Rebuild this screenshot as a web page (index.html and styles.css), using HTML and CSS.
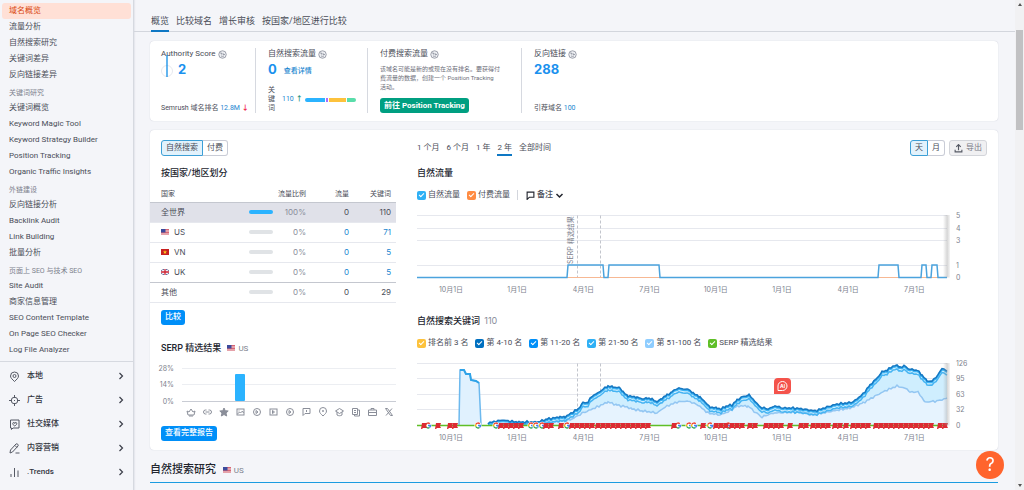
FILE: index.html
```html
<!DOCTYPE html>
<html lang="zh-CN">
<head>
    <meta charset="UTF-8">
    <meta name="viewport" content="width=device-width, initial-scale=1.0">
    <title>域名概览</title>
    <link rel="stylesheet" href="styles.css">
</head>
<body>
    <!-- shared icons -->
    <svg class="sprite" aria-hidden="true">
        <symbol id="flag-us" viewBox="0 0 16 12">
            <rect width="16" height="12" fill="#f3dfe2"/>
            <path d="M0 1h16M0 4h16M0 7h16M0 10h16" stroke="#cf4557" stroke-width="1.6"/>
            <rect width="9" height="7" fill="#3c4a9c"/>
        </symbol>
        <symbol id="flag-vn" viewBox="0 0 16 12">
            <rect width="16" height="12" fill="#c8201f"/>
            <path d="M8 2l1 3h3L9.600 7l1 3L8 8.200 5.400 10l1-3L4 5h3z" fill="#ffd21f"/>
        </symbol>
        <symbol id="flag-uk" viewBox="0 0 16 12">
            <rect width="16" height="12" fill="#2b3a7c"/>
            <path d="M0 0l16 12M16 0L0 12" stroke="#fff" stroke-width="2.400"/>
            <path d="M8 0v12M0 6h16" stroke="#fff" stroke-width="5"/>
            <path d="M8 0v12M0 6h16" stroke="#cc2233" stroke-width="2.600"/>
        </symbol>
        <symbol id="globe" viewBox="0 0 18 18">
            <circle cx="9" cy="9" r="7.500" fill="#eceef2" stroke="#8a8e9b" stroke-width="1.600"/>
            <path d="M4 6h3v3M10 6v3h4M6 12c2 1 4 1 6 0" fill="none" stroke="#8a8e9b" stroke-width="1.600"/>
        </symbol>
        <symbol id="chevron" viewBox="0 0 8 10">
            <path d="M2 1l4 4-4 4" fill="none" stroke="#3c3f4a" stroke-width="1.600"/>
        </symbol>
    </svg>

    <aside class="sidebar">
        <nav class="menu">
            <a href="#" class="active">域名概览</a>
            <a href="#">流量分析</a>
            <a href="#">自然搜索研究</a>
            <a href="#">关键词差异</a>
            <a href="#">反向链接差异</a>
            <h4>关键词研究</h4>
            <a href="#">关键词概览</a>
            <a href="#">Keyword Magic Tool</a>
            <a href="#">Keyword Strategy Builder</a>
            <a href="#">Position Tracking</a>
            <a href="#">Organic Traffic Insights</a>
            <h4>外链建设</h4>
            <a href="#">反向链接分析</a>
            <a href="#">Backlink Audit</a>
            <a href="#">Link Building</a>
            <a href="#">批量分析</a>
            <h4>页面上 SEO 与技术 SEO</h4>
            <a href="#">Site Audit</a>
            <a href="#">商家信息管理</a>
            <a href="#">SEO Content Template</a>
            <a href="#">On Page SEO Checker</a>
            <a href="#">Log File Analyzer</a>
        </nav>
        <div class="sections">
            <button type="button">
                <svg class="icon" viewBox="0 0 22 22"><path d="M11 21c-4-4-8-7-8-11a8 8 0 0 1 16 0c0 4-4 7-8 11z"/><circle cx="11" cy="10" r="3"/></svg>
                <span>本地</span><svg class="arrow"><use href="#chevron"/></svg>
            </button>
            <button type="button">
                <svg class="icon" viewBox="0 0 22 22"><circle cx="11" cy="11" r="6.500"/><path d="M11 0v6M11 16v6M0 11h6M16 11h6M10 11h2"/></svg>
                <span>广告</span><svg class="arrow"><use href="#chevron"/></svg>
            </button>
            <button type="button">
                <svg class="icon" viewBox="0 0 22 22"><path d="M3 2h17v16H8l-3 3v-3H3z"/><path d="M11.500 14c-3-2-4-3-4-5a2 2 0 0 1 4 0 2 2 0 0 1 4 0c0 2-1 3-4 5z"/></svg>
                <span>社交媒体</span><svg class="arrow"><use href="#chevron"/></svg>
            </button>
            <button type="button">
                <svg class="icon" viewBox="0 0 22 22"><path d="M2 20l1-6L14 2c2-2 6 2 4 4L7 18zM12 5l4 4M13 20h8"/></svg>
                <span>内容营销</span><svg class="arrow"><use href="#chevron"/></svg>
            </button>
            <button type="button">
                <svg class="icon" viewBox="0 0 22 22"><path d="M4 20v-6M11 20V2M18 20V7"/></svg>
                <span>.Trends</span><svg class="arrow"><use href="#chevron"/></svg>
            </button>
        </div>
    </aside>

    <main class="main">
        <nav class="tabs">
            <a href="#" class="active">概览</a>
            <a href="#">比较域名</a>
            <a href="#">增长审核</a>
            <a href="#">按国家/地区进行比较</a>
        </nav>

        <div class="content">
            <section class="card summary">
                <div class="stat">
                    <h3>Authority Score <svg class="globe"><use href="#globe"/></svg></h3>
                    <div class="value score">
                        <svg class="gauge" viewBox="0 0 12 24"><circle cx="6" cy="17" r="5.500" fill="none" stroke="#e6e8ee"/><path d="M6 1v22" stroke="#2196e8" stroke-width="1.400"/></svg>
                        <a href="#">2</a>
                    </div>
                    <p class="foot">Semrush 域名排名 <a href="#">12.8M</a> <span class="down">↓</span></p>
                </div>
                <div class="stat">
                    <h3>自然搜索流量 <svg class="globe"><use href="#globe"/></svg></h3>
                    <div class="value"><a href="#">0</a> <a href="#" class="more">查看详情</a></div>
                    <div class="foot keywords">
                        <span class="label">关键词</span>
                        <a href="#">110</a><span class="up">↑</span>
                        <div class="stack"><i class="blue"></i><i class="purple"></i><i class="yellow"></i><i class="green"></i></div>
                    </div>
                </div>
                <div class="stat">
                    <h3>付费搜索流量 <svg class="globe"><use href="#globe"/></svg></h3>
                    <p class="desc">该域名可能是新的或现在没有排名。要获得付费流量的数据，创建一个 Position Tracking <span>活动。</span></p>
                    <button type="button" class="btn btn-green">前往 Position Tracking</button>
                </div>
                <div class="stat">
                    <h3>反向链接 <svg class="globe"><use href="#globe"/></svg></h3>
                    <div class="value"><a href="#">288</a></div>
                    <p class="foot">引荐域名 <a href="#">100</a></p>
                </div>
            </section>

            <section class="card details">
                <div class="left">
                    <div class="switch">
                        <button type="button" class="active">自然搜索</button><button type="button">付费</button>
                    </div>
                    <h2>按国家/地区划分</h2>
                    <table class="countries">
                        <thead>
                            <tr><th>国家</th><th></th><th>流量比例</th><th>流量</th><th>关键词</th></tr>
                        </thead>
                        <tbody>
                            <tr class="selected"><td>全世界</td><td><div class="bar full"></div></td><td>100%</td><td>0</td><td>110</td></tr>
                            <tr><td><svg class="flag"><use href="#flag-us"/></svg>US</td><td><div class="bar"></div></td><td>0%</td><td><a href="#">0</a></td><td><a href="#">71</a></td></tr>
                            <tr><td><svg class="flag"><use href="#flag-vn"/></svg>VN</td><td><div class="bar"></div></td><td>0%</td><td><a href="#">0</a></td><td><a href="#">5</a></td></tr>
                            <tr class="last"><td><svg class="flag"><use href="#flag-uk"/></svg>UK</td><td><div class="bar"></div></td><td>0%</td><td><a href="#">0</a></td><td><a href="#">5</a></td></tr>
                            <tr><td>其他</td><td><div class="bar"></div></td><td>0%</td><td>0</td><td>29</td></tr>
                        </tbody>
                    </table>
                    <button type="button" class="btn btn-blue">比较</button>
                    <h2 class="serp-title">SERP 精选结果 <span class="country"><svg class="flag"><use href="#flag-us"/></svg>US</span></h2>
                    <svg class="serp-chart" viewBox="0 0 235 60">
                        <g stroke="#eceef2"><path d="M21 7.500h214M21 23.500h214"/><path d="M21 40.500h214" stroke="#c9ccd4"/></g>
                        <rect x="74" y="13" width="10" height="27" rx="1" fill="#2bb3ff"/>
                        <g class="axis" text-anchor="end"><text x="13" y="10">28%</text><text x="13" y="26">14%</text><text x="13" y="43">0%</text></g>
                        <g class="serp-icons" id="serpIcons"></g>
                    </svg>
                    <button type="button" class="btn btn-blue">查看完整报告</button>
                </div>

                <div class="right">
                    <div class="toolbar">
                        <div class="ranges">
                            <button type="button">1 个月</button>
                            <button type="button">6 个月</button>
                            <button type="button">1 年</button>
                            <button type="button" class="active">2 年</button>
                            <button type="button">全部时间</button>
                        </div>
                        <div class="switch">
                            <button type="button" class="active">天</button><button type="button">月</button>
                        </div>
                        <button type="button" class="export">
                            <svg viewBox="0 0 16 16"><path d="M8 11V2M4 5l4-4 4 4M2 10v4h12v-4"/></svg>导出
                        </button>
                    </div>
                    <h2>自然流量</h2>
                    <div class="legend">
                        <label><input type="checkbox" class="c-blue" checked>自然流量</label>
                        <label><input type="checkbox" class="c-orange" checked>付费流量</label>
                        <button type="button" class="notes">
                            <svg viewBox="0 0 16 16"><path d="M2 2h12v9H6l-4 4z"/></svg>备注<svg class="caret" viewBox="0 0 12 12"><path d="M2 4l4 4 4-4"/></svg>
                        </button>
                    </div>
                    <svg class="chart" viewBox="0 0 570 86" id="trafficChart"></svg>
                    <h2 class="kw-title">自然搜索关键词 <span>110</span></h2>
                    <div class="legend">
                        <label><input type="checkbox" class="c-yellow" checked>排名前 3 名</label>
                        <label><input type="checkbox" class="c-navy" checked>第 4-10 名</label>
                        <label><input type="checkbox" class="c-mid" checked>第 11-20 名</label>
                        <label><input type="checkbox" class="c-blue" checked>第 21-50 名</label>
                        <label><input type="checkbox" class="c-light" checked>第 51-100 名</label>
                        <label><input type="checkbox" class="c-green" checked>SERP 精选结果</label>
                    </div>
                    <svg class="chart" viewBox="0 3 570 82" id="keywordChart"></svg>
                </div>
            </section>

            <h1>自然搜索研究 <span class="country"><svg class="flag"><use href="#flag-us"/></svg>US</span></h1>
        </div>
    </main>

    <div class="scrollbar"><span class="tri up-tri"></span><div class="thumb"></div><span class="tri down-tri"></span></div>
    <button type="button" class="help">?</button>
    <script src="charts.js"></script>
</body>
</html>
```
FILE: styles.css
```css
* {
    box-sizing: border-box;
}
body {
    margin: 0;
    height: 100vh;
    overflow: hidden;
    display: flex;
    background-color: #f4f5f9;
    color: #4a4d58;
    font-family: Roboto, "Noto Sans CJK SC", sans-serif;
    font-size: 8px;
    line-height: 10px;
}
h1, h2, h3, h4, p {
    margin: 0;
    font-weight: normal;
}
a {
    color: #1a86cf;
    text-decoration: none;
}
button {
    font: inherit;
    color: inherit;
    border: none;
    background: none;
    padding: 0;
    cursor: pointer;
}
.sprite {
    display: none;
}

/* sidebar */
.sidebar {
    flex: none;
    width: 134px;
    border-right: 1px solid #d6d9e0;
    box-shadow: 1px 0 1px #e6e8ee;
}
.menu {
    padding: 3px 2px 3px;
}
.menu a {
    display: block;
    padding: 0 7px;
    line-height: 16px;
    color: #4a4d58;
    border-radius: 3px;
}
.menu a.active {
    background-color: #ffe0d6;
    color: #d9480f;
}
.menu h4 {
    padding: 5px 7px 0;
    margin-bottom: 2px;
    font-size: 7px;
    line-height: 10px;
    color: #7d818d;
}
.sections {
    border-top: 1px solid #d6d9e0;
    padding-top: 2px;
}
.sections button {
    display: flex;
    align-items: center;
    gap: 7px;
    width: 100%;
    height: 24px;
    padding: 0 9px;
    font-weight: 500;
    text-align: left;
    color: #33363f;
}
.sections span {
    flex: 1;
}
.sections .icon {
    width: 11px;
    height: 11px;
    fill: none;
    stroke: #555964;
    stroke-width: 2;
}
.sections .arrow {
    width: 6px;
    height: 8px;
}

/* top tabs */
.main {
    flex: 1;
    min-width: 0;
}
.tabs {
    display: flex;
    gap: 7px;
    padding: 15px 17px 0;
    border-bottom: 1px solid #d3d6dd;
    font-size: 9px;
}
.tabs a {
    color: #4a4d58;
    line-height: 12px;
    padding-bottom: 4px;
}
.tabs .active {
    box-shadow: 0 1px #0f78c4, inset 0 -1px #0f78c4;
}
.content {
    padding: 9px 17px 0 16px;
}
.card {
    background-color: #fff;
    border-radius: 4px;
    box-shadow: 0 0 1px #b9bfcc;
}

/* summary */
.summary {
    display: grid;
    grid-template-columns: 94px 112px 154px 1fr;
    padding: 7px 11px 8px;
    margin-bottom: 9px;
}
.stat {
    display: flex;
    flex-direction: column;
    height: 65px;
    padding-left: 12px;
    border-left: 1px solid #d6d9e0;
}
.stat:first-child {
    padding-left: 0;
    border-left: none;
}
.stat h3 {
    display: flex;
    align-items: center;
    gap: 2px;
    font-size: 8px;
    line-height: 12px;
}
.globe {
    width: 9px;
    height: 9px;
}
.value {
    display: flex;
    align-items: center;
    gap: 7px;
    font: bold 13px/18px Inter, sans-serif;
}
.value a {
    color: #1a91ee;
}
.value .more {
    font: 500 7px/14px Roboto, "Noto Sans CJK SC", sans-serif;
    padding-top: 4px;
    color: #1a86cf;
}
.score {
    position: relative;
    padding-left: 17px;
}
.gauge {
    position: absolute;
    left: 0;
    bottom: 0;
    width: 12px;
    height: 24px;
}
.foot {
    margin-top: auto;
    font-size: 7px;
}
.down, .up {
    font-weight: bold;
}
.down {
    color: #f0203f;
}
.up {
    color: #24937a;
}
.keywords {
    display: flex;
    align-items: center;
    gap: 2px;
    line-height: 9px;
}
.keywords .label {
    width: 7px;
    margin-right: 5px;
}
.stack {
    display: flex;
    gap: 1px;
    width: 51px;
    height: 4px;
    border-radius: 2px;
    overflow: hidden;
}
.stack .blue { flex: 21; background-color: #2bb3ff; }
.stack .purple { flex: 2; background-color: #ab6cfe; }
.stack .yellow { flex: 17; background-color: #fdc23c; }
.stack .green { flex: 9; background-color: #59ddaa; }
.desc {
    width: 124px;
    padding-top: 4px;
    font-size: 6px;
    line-height: 9px;
    color: #6c6e79;
}
.desc span {
    white-space: nowrap;
}
.btn {
    height: 15px;
    padding: 0 4px;
    border-radius: 3px;
    color: #fff;
    font-weight: 500;
}
.btn-green {
    align-self: flex-start;
    margin-top: auto;
    background-color: #009f81;
    font-weight: bold;
}
.btn-blue {
    background-color: #008ff8;
}

/* details */
.details {
    display: flex;
    gap: 21px;
    padding: 10px 11px 9px 0;
}
.left {
    width: 246px;
    padding-left: 11px;
}
.right {
    flex: 1;
    min-width: 0;
}
h2 {
    font-size: 9px;
    font-weight: 500;
    line-height: 12px;
    color: #22252e;
}
.left h2, .right h2 {
    margin-top: 11px;
}
.switch {
    display: flex;
}
.switch button {
    height: 16px;
    padding: 0 4px;
    border: 1px solid #c9ccd6;
    border-left: none;
    border-radius: 0 3px 3px 0;
}
.switch .active {
    border: 1px solid #3c9fd6;
    border-radius: 3px 0 0 3px;
    background-color: #e2f2fc;
}
.countries {
    width: 246px;
    margin: 7px 0 7px -11px;
    border-collapse: collapse;
    table-layout: fixed;
    font-family: Inter, "Noto Sans CJK SC", sans-serif;
}
.countries th {
    height: 16px;
    padding: 0;
    font-size: 7px;
    font-weight: normal;
    text-align: right;
    border-bottom: 1px solid #c4c7cf;
}
.countries th:first-child, .countries td:first-child {
    width: 99px;
    padding-left: 11px;
    text-align: left;
}
.countries th:nth-child(2) { width: 24px; }
.countries th:nth-child(3) { width: 33px; }
.countries th:nth-child(4) { width: 43px; }
.countries th:last-child, .countries td:last-child {
    padding-right: 5px;
}
.countries td {
    height: 20px;
    padding: 0;
    text-align: right;
    border-bottom: 1px solid #e6e8ee;
}
.countries td:nth-child(3) {
    color: #898d9a;
}
.countries .selected td {
    background-color: #e0e1e9;
}
.countries .last td {
    border-bottom-color: #c4c7cf;
}
.bar {
    height: 4px;
    border-radius: 2px;
    background-color: #e0e3e6;
}
.bar.full {
    background-color: #2bb3ff;
}
.flag {
    width: 8px;
    height: 6px;
    margin-right: 5px;
}
.left .serp-title {
    margin: 17px 0 6px;
}
.country {
    margin-left: 4px;
    font-size: 8px;
    font-weight: normal;
    color: #7d818d;
}
.country .flag {
    margin-right: 3px;
}
.serp-chart {
    display: block;
    width: 100%;
    margin-bottom: 5px;
    overflow: visible;
}
.serp-icons {
    fill: none;
    stroke: #8a8e99;
    stroke-width: 1;
}
.toolbar {
    display: flex;
    gap: 4px;
}
.ranges {
    flex: 1;
    display: flex;
    gap: 7px;
}
.ranges button {
    height: 16px;
}
.ranges .active {
    border-bottom: 2px solid #0f78c4;
    padding-top: 2px;
}
.export {
    display: flex;
    align-items: center;
    gap: 3px;
    height: 16px;
    padding: 0 4px;
    border: 1px solid #d3d5da;
    border-radius: 3px;
    background-color: #f0f0f2;
    color: #777a84;
}
.export svg, .notes svg {
    width: 9px;
    height: 9px;
    fill: none;
    stroke: #555964;
    stroke-width: 2;
}
.legend {
    display: flex;
    align-items: center;
    gap: 7px;
    height: 12px;
    margin: 10px 0 9px;
}
.legend label {
    display: flex;
    align-items: center;
    gap: 2px;
}
.legend input {
    appearance: none;
    display: grid;
    place-content: center;
    width: 9px;
    height: 9px;
    margin: 0;
    border-radius: 2px;
}
.legend input::after {
    content: "";
    width: 4px;
    height: 2px;
    margin-bottom: 1px;
    border: solid #fff;
    border-width: 0 0 1px 1px;
    transform: rotate(-45deg);
}
.c-blue { background-color: #2fb0f5; }
.c-orange { background-color: #ff8c43; }
.c-yellow { background-color: #fdc23c; }
.c-navy { background-color: #0070c0; }
.c-mid { background-color: #008ff8; }
.c-light { background-color: #8ecdff; }
.c-green { background-color: #5fbf27; }
.notes {
    display: flex;
    align-items: center;
    gap: 2px;
    padding-left: 8px;
    border-left: 1px solid #d3d6dd;
    font-weight: 500;
}
.notes svg {
    stroke: #22252e;
}
.chart {
    display: block;
    width: 100%;
    overflow: visible;
}
.chart text, .axis text {
    font-family: Inter, "Noto Sans CJK SC", sans-serif;
    font-size: 7px;
    fill: #7d818d;
}
.right .kw-title {
    margin-top: 19px;
}
.kw-title span {
    margin-left: 2px;
    color: #898d9a;
    font-family: Inter, sans-serif;
    font-weight: normal;
}

h1 {
    padding: 12px 0 4px;
    border-bottom: 1px solid #1a9be0;
    font-size: 11px;
    font-weight: 500;
    line-height: 15px;
    color: #22252e;
}

/* window chrome */
.scrollbar {
    flex: none;
    display: flex;
    flex-direction: column;
    align-items: center;
    width: 9px;
    padding: 3px 0;
    background-color: #f1f1f3;
}
.thumb {
    width: 7px;
    height: 100px;
    margin: 24px 0 auto;
    background-color: #c1c1c3;
}
.tri {
    border: 2px solid transparent;
}
.up-tri {
    border-top: none;
    border-bottom: 3px solid #555;
}
.down-tri {
    border-bottom: none;
    border-top: 3px solid #555;
}
.help {
    position: fixed;
    right: 20px;
    bottom: 11px;
    width: 28px;
    height: 28px;
    border-radius: 50%;
    background-color: #ff642d;
    color: #fff;
    font: 18px/28px Inter, sans-serif;
}
```
FILE: charts.js
```js
const dates = ["10月1日", "1月1日", "4月1日", "7月1日", "10月1日", "1月1日", "4月1日", "7月1日"];

function grid(rows, bottom) {
    let out = '<defs><linearGradient id="edge' + bottom + '"><stop offset="0" stop-color="#999" stop-opacity="0"/><stop offset=".6" stop-color="#999" stop-opacity=".4"/><stop offset="1" stop-color="#999" stop-opacity=".1"/></linearGradient></defs>';
    rows.forEach(([y, label]) => {
        out += `<path d="M0 ${y}h530" stroke="#e6e8ee"/><text x="539" y="${y + 2}">${label}</text>`;
    });
    dates.forEach((d, i) => {
        out += `<text x="${34 + i * 66.2}" y="${bottom + 14}" text-anchor="middle">${d}</text>`;
    });
    out += `<path d="M160.500 ${rows[0][0]}V${bottom}M183.500 ${rows[0][0]}V${bottom}" stroke="#c2c5cc" stroke-dasharray="3 2"/>`;
    return out;
}

function edge(top, bottom) {
    return `<rect x="526" y="${top}" width="7" height="${bottom - top}" fill="url(#edge${bottom})"/>`;
}

// fill in between the known points with a little daily noise
function daily(points, shift) {
    const out = [];
    for (let i = 0; i < points.length - 1; i++) {
        const [x1, y1] = points[i], [x2, y2] = points[i + 1];
        for (let x = x1; x < x2; x += 2) {
            const noise = Math.sin(x * 1.7) * 0.7 + Math.sin(x * 0.9) * 0.4;
            out.push([x, Math.min(69, y1 + (y2 - y1) * (x - x1) / (x2 - x1) + noise + shift)]);
        }
    }
    out.push([530, points[points.length - 1][1] + shift]);
    return out.map(p => p[0] + " " + p[1].toFixed(1)).join("L");
}

document.getElementById("trafficChart").innerHTML =
    grid([[5.5, 5], [18.5, 4], [30.5, 3], [55.5, 1], [67.5, 0]], 67.5) +
    '<text transform="translate(156 54) rotate(-90)">SERP 精选结果</text>' +
    '<path d="M0 67.500h530" stroke="#f7b893"/>' +
    '<path d="M0 67.500H150L151 55H186L187 67.500H191L192 55H242L243 67.500H461L462 55H481L482 67.500H504L505 55H509L510 67.500H514L515 55H520L521 67.500H530" fill="none" stroke="#4ba3dd" stroke-width="1.500"/>' +
    edge(5, 67.5);

const total = [[71,68],[85,65],[100,67],[121,67],[130,64],[143,62],[148,62],[156,57],[161,54],[166,48],[171,47],[175,41],[181,38],[186,34],[191,31],[196,32],[203,33],[206,37],[211,41],[220,42],[225,44],[230,43],[235,44],[240,47],[245,43],[250,40],[255,37],[260,33],[266,34],[271,34],[276,38],[283,42],[288,47],[293,52],[300,53],[304,54],[309,51],[315,50],[320,45],[325,42],[332,40],[336,44],[343,52],[351,54],[358,51],[366,53],[376,53],[386,54],[398,56],[410,52],[420,49],[430,48],[436,47],[446,39],[453,30],[460,23],[465,17],[470,15],[478,10],[483,12],[489,11],[491,14],[500,15],[505,20],[510,26],[515,26],[521,20],[525,13],[530,16]];
const low = [[71,69],[121,69],[143,66],[153,65],[166,58],[180,52],[191,47],[200,50],[210,52],[215,54],[226,56],[240,58],[248,52],[260,47],[271,46],[281,50],[291,58],[303,60],[313,56],[320,51],[331,51],[338,57],[345,62],[356,58],[383,57],[396,60],[416,56],[433,53],[446,48],[460,40],[470,35],[480,31],[490,34],[493,37],[501,37],[508,47],[521,46],[530,43]];
const bump = "M42 70L43 15 47 15 49 19 53 19 54 25 59 26 62 28 64 70";

let kw = grid([[8.5, 126], [23.5, 95], [39.5, 63], [54.5, 32], [70.5, 0]], 70.5);
kw += `<path d="${bump}" fill="#e0f1fe" stroke="#6db9ee" stroke-width="1.500"/>`;
kw += '<path d="M43 15h4l2 4h4l1 6 5 1 3 2" fill="none" stroke="#2fa3e8" stroke-width="2"/>';
kw += `<path d="M71 70L${daily(total, 0)}L530 70z" fill="#cfeefe"/>`;
kw += `<path d="M71 70L${daily(low, 0)}L530 70z" fill="#e6f3fe"/>`;
kw += `<path d="M${daily(low, 0)}" fill="none" stroke="#93c6f2" stroke-width="1.500"/>`;
kw += `<path d="M${daily(total, 4)}" fill="none" stroke="#46b4f2" stroke-width="1.500"/>`;
kw += `<path d="M${daily(total, 1)}" fill="none" stroke="#3bb4f5" stroke-width="2"/>`;
kw += `<path d="M${daily(total, 0)}" fill="none" stroke="#1678c2" stroke-width="1.500"/>`;
kw += '<path d="M0 70.500h530" stroke="#5fbf27" stroke-width="1.500"/>';

// google updates
[11, 61, 79, 114, 119, 125, 150, 261, 272, 277, 293, 311].forEach(x => {
    kw += `<g transform="translate(${x} 70.500)" fill="none" stroke-width="1.400"><circle r="3.500" fill="#fff" stroke="none"/><path d="M1.800-1.800A2.500 2.500 0 0 0-2.200-1" stroke="#ea4335"/><path d="M-2.200-1A2.500 2.500 0 0 0-2.200 1" stroke="#fbbc05"/><path d="M-2.200 1A2.500 2.500 0 0 0 1.500 2" stroke="#34a853"/><path d="M1.500 2A2.500 2.500 0 0 0 2.500 0H0" stroke="#4285f4"/></g>`;
});
// notes: start and end of each run of flags
[[7,7],[21,21],[33,40],[84,104],[129,138],[144,144],[155,175],[181,233],[257,257],[286,286],[299,309],[315,325],[333,341],[349,364],[373,373],[384,389],[396,411],[418,423],[429,429],[436,451],[459,517],[523,530]].forEach(([a, b]) => {
    for (let x = a; x <= b; x += 5) {
        kw += `<path d="M${x - 2} 68h5l-1 3 1 2h-4l-1 1h-1z" fill="#dc2b33"/>`;
    }
});
kw += '<g transform="translate(357 23)"><path d="M4 0h9a4 4 0 0 1 4 4v8a4 4 0 0 1-4 4H0V4a4 4 0 0 1 4-4z" fill="#f4534b"/><path d="M4 12.500V8a4.500 4.500 0 1 1 4.500 4.500z" fill="none" stroke="#fff"/><text x="8.500" y="10" text-anchor="middle" style="fill:#fff;font-size:5px;font-weight:bold">AI</text></g>';
kw += edge(8, 70.5);
document.getElementById("keywordChart").innerHTML = kw;

const play = '<circle r="3.500"/><path d="M-1-1.500v3l2-1.500z"/>';
document.getElementById("serpIcons").innerHTML = [
    '<path d="M-4-1l2 1 2-3 2 3 2-1-1 4h-6zM-2 4h4"/>',
    '<path d="M-1-2h-1a2 2 0 0 0 0 4h1M1-2h1a2 2 0 0 1 0 4h-1M-2 0h4"/>',
    '<path d="M0-4l1.200 2.700 3 .3-2.200 2 .7 3L0 2.500-2.700 4l.7-3-2.200-2 3-.3z" fill="#8a8e99"/>',
    '<rect x="-3.500" y="-3" width="7" height="6"/><path d="M-3 2l2-2 1 1 2-2 1 2M-2-1h1"/>',
    play,
    '<rect x="-3.500" y="-3" width="7" height="6"/><path d="M-1-1.500v3l2-1.500z"/>',
    play,
    '<path d="M-3.500-3.500h7v5h-5l-2 2zM0-2v2"/>',
    '<path d="M0 4c-2-2-3.500-3-3.500-5a3.500 3.500 0 0 1 7 0c0 2-1.500 3-3.500 5z"/><circle cy="-1" r=".6"/>',
    '<path d="M-4-1l4-2.500L4-1 0 1.500zM-2.500 0v3c2 1 3 1 5 0v-3"/>',
    '<path d="M-3.500-3.500h5v6h-5zM2-2h1.500v6h-5v-1M-2-1.500h2M-2 .5h2"/>',
    '<path d="M-4-2h8v5.500h-8zM-1.500-2v-1.500h3v1.500M-4 .5h8"/>',
    '<path d="M-3.500-3.500h2l5 7h-2zM3-3.500l-6 7"/>'
].map((icon, i) => `<g transform="translate(${30 + i * 16.5} 51)">${icon}</g>`).join("");
```
